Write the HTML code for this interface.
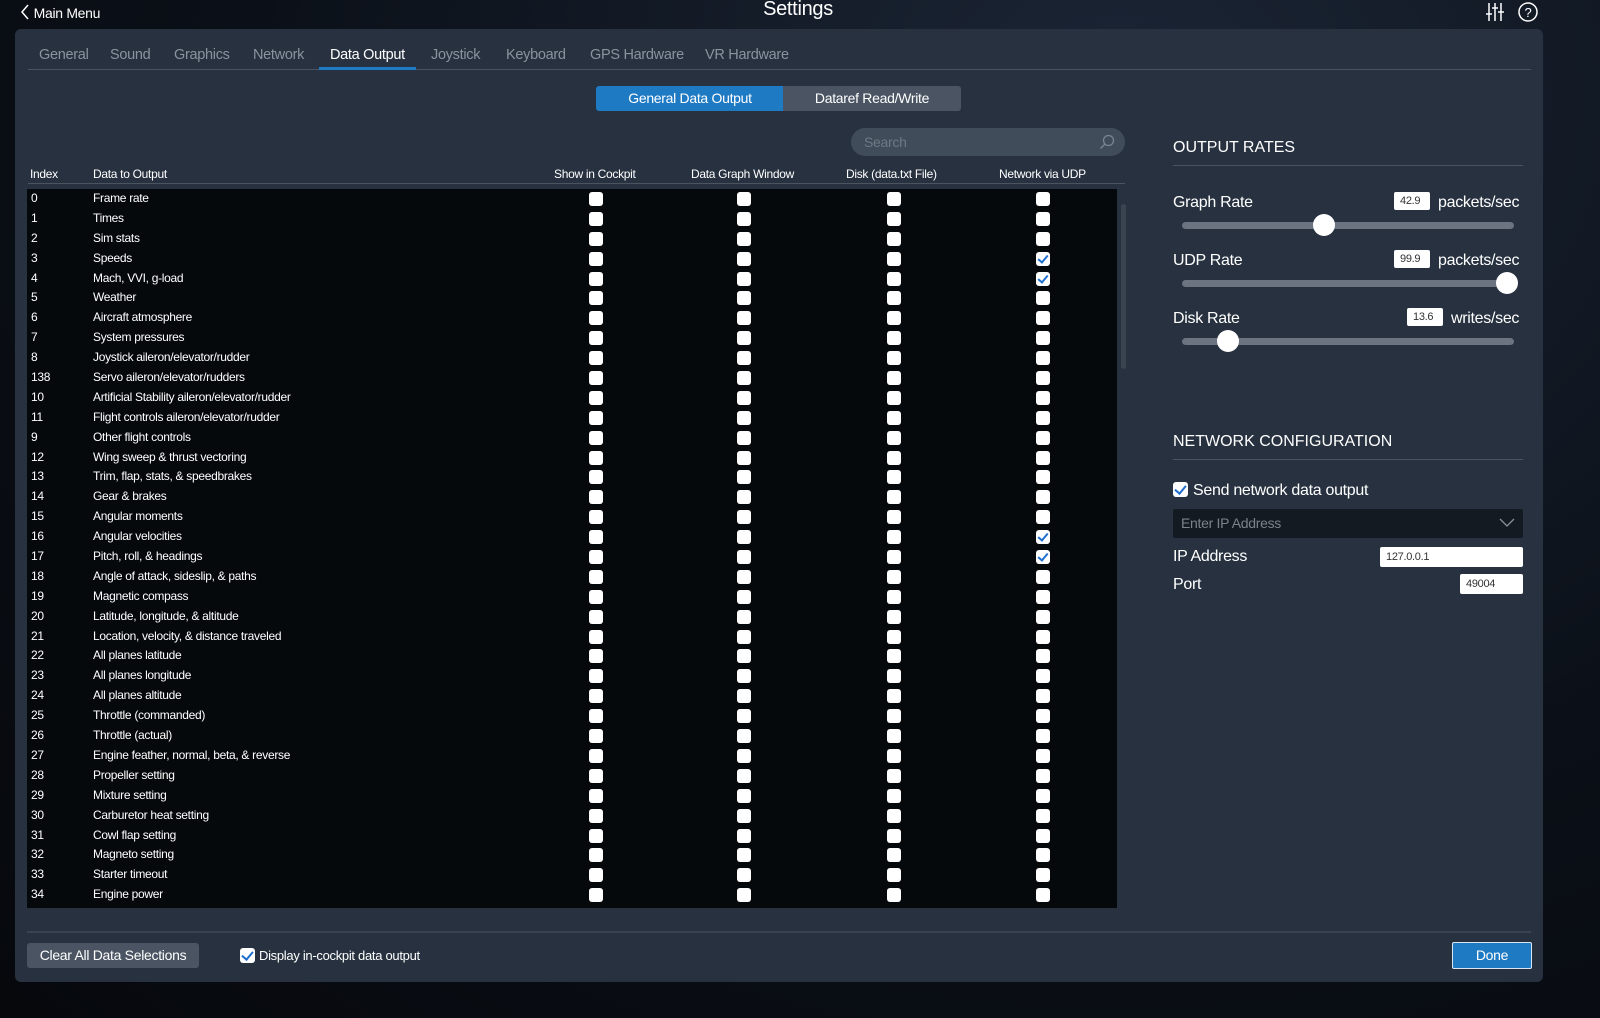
<!DOCTYPE html>
<html><head><meta charset="utf-8"><style>
*{margin:0;padding:0;box-sizing:border-box}
body{width:1600px;height:1018px;overflow:hidden;background:radial-gradient(ellipse at 70% 10%,#1b2535 0%,#0b1018 55%,#06080c 100%);font-family:"Liberation Sans",sans-serif;color:#fff;position:relative;letter-spacing:-0.3px}
.abs{position:absolute}
#mm{left:20px;top:4px;font-size:14px;color:#fff}
#title{left:0;width:1596px;text-align:center;top:-2px;font-size:20px}
#panel{left:15px;top:29px;width:1528px;height:953px;background:#27313f;border-radius:6px}
.tab{position:absolute;top:18px;font-size:14.5px;color:#8a939e}
.tab.on{color:#fff}
#tabline{left:13px;top:40px;width:1503px;height:1px;background:#4a5360}
#tabul{left:304px;top:38px;width:97px;height:3px;background:#1f7ac4}
.seg{position:absolute;top:57px;height:25px;font-size:14px;text-align:center;line-height:25px}
#search{left:836px;top:99px;width:274px;height:28px;border-radius:14px;background:#414c5a;color:#6f7884;font-size:14px;line-height:28px;padding-left:13px}
.hd{position:absolute;top:138px;font-size:12px;color:#fff}
#hline{left:13px;top:154px;width:1097px;height:1px;background:#4a5360}
#tbl{left:12px;top:160px;width:1090px;height:719px;background:#06090c;overflow:hidden}
.r{height:19.9px;position:relative;font-size:12px;line-height:19.9px}
.r i{font-style:normal;position:absolute;left:4px}
.r b{font-weight:normal;position:absolute;left:66px}
.r s{position:absolute;top:3px;width:14px;height:14px;background:#fff;border-radius:3px}
.r s:nth-of-type(1){left:562px}.r s:nth-of-type(2){left:710px}.r s:nth-of-type(3){left:860px}.r s:nth-of-type(4){left:1009px}
.r s.c::after{content:"";position:absolute;left:4px;top:1px;width:4px;height:8px;border:solid #1f6fd0;border-width:0 2px 2px 0;transform:rotate(40deg)}
#scroll{left:1106px;top:175px;width:5px;height:165px;background:#3a4450;border-radius:3px}
.h2{position:absolute;font-size:16px;color:#fff;letter-spacing:0}
.ln{position:absolute;left:1158px;width:350px;height:1px;background:#4a5360}
.lbl{position:absolute;font-size:16px;color:#fff}
.vb{position:absolute;height:18px;background:#fff;color:#333;font-size:11px;line-height:18px;padding-left:6px;border-radius:2px}
.trk{position:absolute;left:1167px;width:332px;height:7px;background:#6b7480;border-radius:4px}
.knob{position:absolute;width:22px;height:22px;background:#fff;border-radius:50%}
.cb{position:absolute;width:15px;height:15px;background:#fff;border-radius:3px}
.cb::after{content:"";position:absolute;left:4px;top:1px;width:5px;height:9px;border:solid #1f6fd0;border-width:0 2.5px 2.5px 0;transform:rotate(40deg)}
</style></head><body>
<div class="abs" id="mm"><svg width="10" height="16" style="vertical-align:-2px" viewBox="0 0 10 16"><path d="M8 1L2 8l6 7" stroke="#fff" stroke-width="1.5" fill="none"/></svg> Main Menu</div>
<div class="abs" id="title">Settings</div>
<svg class="abs" style="left:1484px;top:2px" width="22" height="20" viewBox="0 0 22 20"><g stroke="#fff" stroke-width="1.5" fill="none"><path d="M5 1v18M11 1v18M17 1v18"/><path d="M2 12h6M8 6h6M14 10h6"/></g></svg>
<svg class="abs" style="left:1517px;top:1px" width="22" height="22" viewBox="0 0 22 22"><circle cx="11" cy="11" r="9" stroke="#fff" stroke-width="1.5" fill="none"/><text x="11" y="16" fill="#fff" font-size="13" text-anchor="middle" font-family="Liberation Sans">?</text></svg>
<div class="abs" id="panel">
<span class="tab" style="left:24px">General</span>
<span class="tab" style="left:95px">Sound</span>
<span class="tab" style="left:159px">Graphics</span>
<span class="tab" style="left:238px">Network</span>
<span class="tab on" style="left:315px">Data Output</span>
<span class="tab" style="left:416px">Joystick</span>
<span class="tab" style="left:491px">Keyboard</span>
<span class="tab" style="left:575px">GPS Hardware</span>
<span class="tab" style="left:690px">VR Hardware</span>
<div class="abs" id="tabline"></div><div class="abs" id="tabul"></div>
<div class="seg" style="left:581px;width:188px;background:#1f7ac4;border-radius:3px 0 0 3px">General Data Output</div>
<div class="seg" style="left:768px;width:178px;background:#4a5462;border-radius:0 3px 3px 0">Dataref Read/Write</div>
<div class="abs" id="search">Search<svg class="abs" style="right:10px;top:6px" width="16" height="16" viewBox="0 0 16 16"><circle cx="9.5" cy="6.5" r="5" stroke="#7b8490" stroke-width="1.3" fill="none"/><path d="M6 10l-4.5 4.5" stroke="#7b8490" stroke-width="1.3"/></svg></div>
<span class="hd" style="left:15px">Index</span>
<span class="hd" style="left:78px">Data to Output</span>
<span class="hd" style="left:539px">Show in Cockpit</span>
<span class="hd" style="left:676px">Data Graph Window</span>
<span class="hd" style="left:831px">Disk (data.txt File)</span>
<span class="hd" style="left:984px">Network via UDP</span>
<div class="abs" id="hline"></div>
<div class="abs" id="tbl">
<div class="r"><i>0</i><b>Frame rate</b><s></s><s></s><s></s><s></s></div>
<div class="r"><i>1</i><b>Times</b><s></s><s></s><s></s><s></s></div>
<div class="r"><i>2</i><b>Sim stats</b><s></s><s></s><s></s><s></s></div>
<div class="r"><i>3</i><b>Speeds</b><s></s><s></s><s></s><s class="c"></s></div>
<div class="r"><i>4</i><b>Mach, VVI, g-load</b><s></s><s></s><s></s><s class="c"></s></div>
<div class="r"><i>5</i><b>Weather</b><s></s><s></s><s></s><s></s></div>
<div class="r"><i>6</i><b>Aircraft atmosphere</b><s></s><s></s><s></s><s></s></div>
<div class="r"><i>7</i><b>System pressures</b><s></s><s></s><s></s><s></s></div>
<div class="r"><i>8</i><b>Joystick aileron/elevator/rudder</b><s></s><s></s><s></s><s></s></div>
<div class="r"><i>138</i><b>Servo aileron/elevator/rudders</b><s></s><s></s><s></s><s></s></div>
<div class="r"><i>10</i><b>Artificial Stability aileron/elevator/rudder</b><s></s><s></s><s></s><s></s></div>
<div class="r"><i>11</i><b>Flight controls aileron/elevator/rudder</b><s></s><s></s><s></s><s></s></div>
<div class="r"><i>9</i><b>Other flight controls</b><s></s><s></s><s></s><s></s></div>
<div class="r"><i>12</i><b>Wing sweep &amp; thrust vectoring</b><s></s><s></s><s></s><s></s></div>
<div class="r"><i>13</i><b>Trim, flap, stats, &amp; speedbrakes</b><s></s><s></s><s></s><s></s></div>
<div class="r"><i>14</i><b>Gear &amp; brakes</b><s></s><s></s><s></s><s></s></div>
<div class="r"><i>15</i><b>Angular moments</b><s></s><s></s><s></s><s></s></div>
<div class="r"><i>16</i><b>Angular velocities</b><s></s><s></s><s></s><s class="c"></s></div>
<div class="r"><i>17</i><b>Pitch, roll, &amp; headings</b><s></s><s></s><s></s><s class="c"></s></div>
<div class="r"><i>18</i><b>Angle of attack, sideslip, &amp; paths</b><s></s><s></s><s></s><s></s></div>
<div class="r"><i>19</i><b>Magnetic compass</b><s></s><s></s><s></s><s></s></div>
<div class="r"><i>20</i><b>Latitude, longitude, &amp; altitude</b><s></s><s></s><s></s><s></s></div>
<div class="r"><i>21</i><b>Location, velocity, &amp; distance traveled</b><s></s><s></s><s></s><s></s></div>
<div class="r"><i>22</i><b>All planes latitude</b><s></s><s></s><s></s><s></s></div>
<div class="r"><i>23</i><b>All planes longitude</b><s></s><s></s><s></s><s></s></div>
<div class="r"><i>24</i><b>All planes altitude</b><s></s><s></s><s></s><s></s></div>
<div class="r"><i>25</i><b>Throttle (commanded)</b><s></s><s></s><s></s><s></s></div>
<div class="r"><i>26</i><b>Throttle (actual)</b><s></s><s></s><s></s><s></s></div>
<div class="r"><i>27</i><b>Engine feather, normal, beta, &amp; reverse</b><s></s><s></s><s></s><s></s></div>
<div class="r"><i>28</i><b>Propeller setting</b><s></s><s></s><s></s><s></s></div>
<div class="r"><i>29</i><b>Mixture setting</b><s></s><s></s><s></s><s></s></div>
<div class="r"><i>30</i><b>Carburetor heat setting</b><s></s><s></s><s></s><s></s></div>
<div class="r"><i>31</i><b>Cowl flap setting</b><s></s><s></s><s></s><s></s></div>
<div class="r"><i>32</i><b>Magneto setting</b><s></s><s></s><s></s><s></s></div>
<div class="r"><i>33</i><b>Starter timeout</b><s></s><s></s><s></s><s></s></div>
<div class="r"><i>34</i><b>Engine power</b><s></s><s></s><s></s><s></s></div>
<div class="r"><i>35</i><b>Engine thrust</b><s></s><s></s><s></s><s></s></div>
</div>
<div class="abs" id="scroll"></div>

<div class="h2" style="left:1158px;top:110px">OUTPUT RATES</div>
<div class="ln" style="top:136px"></div>
<div class="lbl" style="left:1158px;top:165px">Graph Rate</div>
<div class="vb" style="left:1379px;top:163px;width:36px">42.9</div>
<div class="lbl" style="left:1423px;top:165px">packets/sec</div>
<div class="trk" style="top:193px"></div><div class="knob" style="left:1298px;top:185px"></div>
<div class="lbl" style="left:1158px;top:223px">UDP Rate</div>
<div class="vb" style="left:1379px;top:221px;width:36px">99.9</div>
<div class="lbl" style="left:1423px;top:223px">packets/sec</div>
<div class="trk" style="top:251px"></div><div class="knob" style="left:1481px;top:243px"></div>
<div class="lbl" style="left:1158px;top:281px">Disk Rate</div>
<div class="vb" style="left:1392px;top:279px;width:36px">13.6</div>
<div class="lbl" style="left:1436px;top:281px">writes/sec</div>
<div class="trk" style="top:309px"></div><div class="knob" style="left:1202px;top:301px"></div>

<div class="h2" style="left:1158px;top:404px">NETWORK CONFIGURATION</div>
<div class="ln" style="top:430px"></div>
<div class="cb" style="left:1158px;top:453px"></div>
<div class="lbl" style="left:1178px;top:453px">Send network data output</div>
<div class="abs" style="left:1158px;top:480px;width:350px;height:29px;background:#141a22;border-radius:2px;color:#7a828c;font-size:14px;line-height:29px;padding-left:8px">Enter IP Address<svg class="abs" style="right:8px;top:9px" width="16" height="10" viewBox="0 0 16 10"><path d="M1 1l7 7 7-7" stroke="#8a929c" stroke-width="1.3" fill="none"/></svg></div>
<div class="lbl" style="left:1158px;top:519px">IP Address</div>
<div class="vb" style="left:1365px;top:518px;width:143px;height:20px;line-height:20px">127.0.0.1</div>
<div class="lbl" style="left:1158px;top:547px">Port</div>
<div class="vb" style="left:1445px;top:545px;width:63px;height:20px;line-height:20px">49004</div>

<div class="abs" style="left:12px;top:902px;width:1504px;height:2px;background:#3a4450"></div>
<div class="abs" style="left:12px;top:914px;width:172px;height:25px;background:#4a5462;border-radius:3px;font-size:14px;line-height:25px;text-align:center">Clear All Data Selections</div>
<div class="cb" style="left:225px;top:919px"></div>
<div class="abs" style="left:244px;top:919px;font-size:13px">Display in-cockpit data output</div>
<div class="abs" style="left:1437px;top:913px;width:80px;height:27px;background:#1f7ac4;border:1.5px solid #d8e6f2;border-radius:2px;font-size:14px;line-height:24px;text-align:center">Done</div>
</div>
</body></html>
